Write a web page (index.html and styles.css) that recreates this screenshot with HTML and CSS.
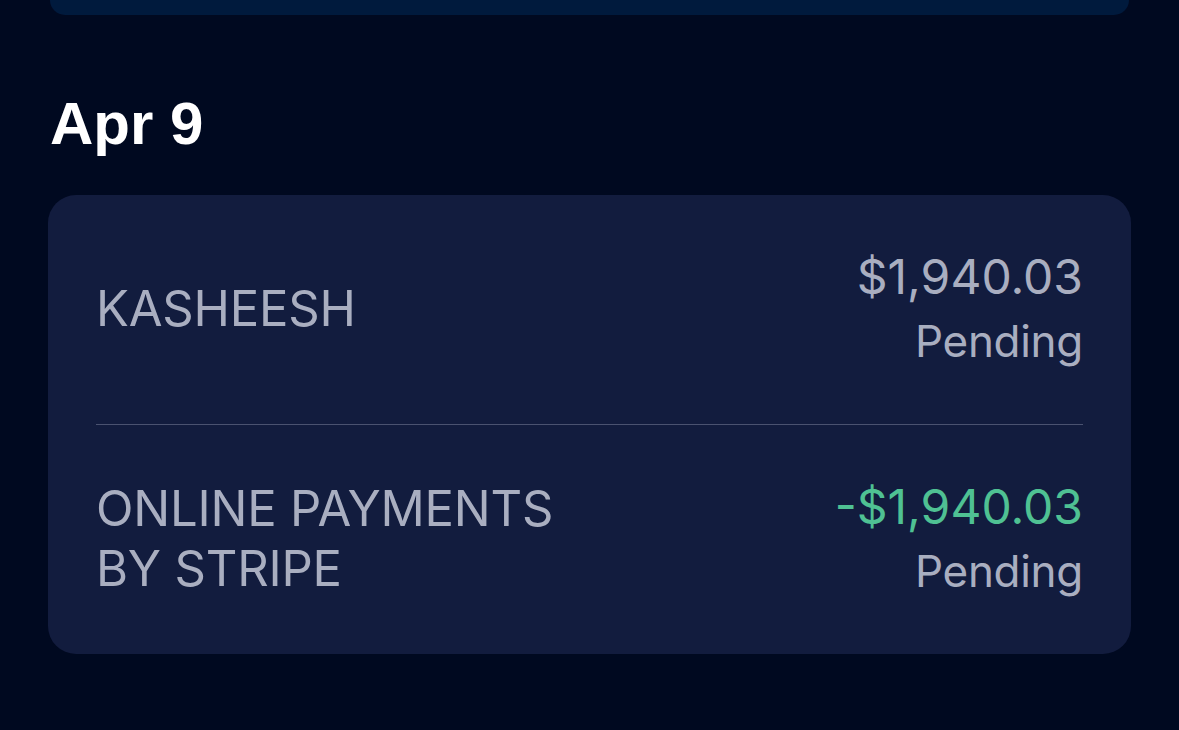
FILE: index.html
```html
<!DOCTYPE html>
<html>
<head>
<meta charset="utf-8">
<link rel="stylesheet" href="styles.css">
</head>
<body>
<div class="page">
  <div class="prev-card"></div>
  <h2 class="date">Apr 9</h2>
  <div class="card">
    <div class="row">
      <div class="name">KASHEESH</div>
      <div class="amount-block">
        <div class="amount">$1,940.03</div>
        <div class="status">Pending</div>
      </div>
    </div>
    <div class="divider"></div>
    <div class="row">
      <div class="name">ONLINE PAYMENTS<br>BY STRIPE</div>
      <div class="amount-block">
        <div class="amount credit">-$1,940.03</div>
        <div class="status">Pending</div>
      </div>
    </div>
  </div>
</div>
</body>
</html>
```

FILE: styles.css
```css
html, body {
  margin: 0;
  padding: 0;
  background: #000920;
}
body {
  font-family: Inter, "Liberation Sans", sans-serif;
  width: 1179px;
  height: 730px;
  overflow: hidden;
}
.page {
  padding: 0 48px;
  display: flex;
  flex-direction: column;
}
.prev-card {
  height: 15px;
  background: #001a3d;
  border-radius: 0 0 26px 26px;
  margin: 0 2px;
}
.date {
  margin: 74px 0 0 2px;
  font-family: "Liberation Sans", Arial, sans-serif;
  font-weight: 700;
  font-size: 60px;
  line-height: 70px;
  color: #ffffff;
  height: 106px;
}
.card {
  background: #121c3e;
  border-radius: 28px;
  padding: 0 48px;
  display: flex;
  flex-direction: column;
}
.row {
  display: flex;
  justify-content: space-between;
  align-items: center;
  padding: 52px 0 53px;
  color: #a9aec0;
  line-height: 60px;
}
.name {
  font-size: 49px;
  letter-spacing: -0.2px;
}
.amount {
  font-size: 48px;
}
.status {
  font-size: 44px;
  letter-spacing: -0.3px;
  padding-top: 4px;
}
.divider {
  height: 1px;
  background: #4a5270;
}
.amount-block {
  text-align: right;
}
.credit {
  color: #4fc193;
}
```
